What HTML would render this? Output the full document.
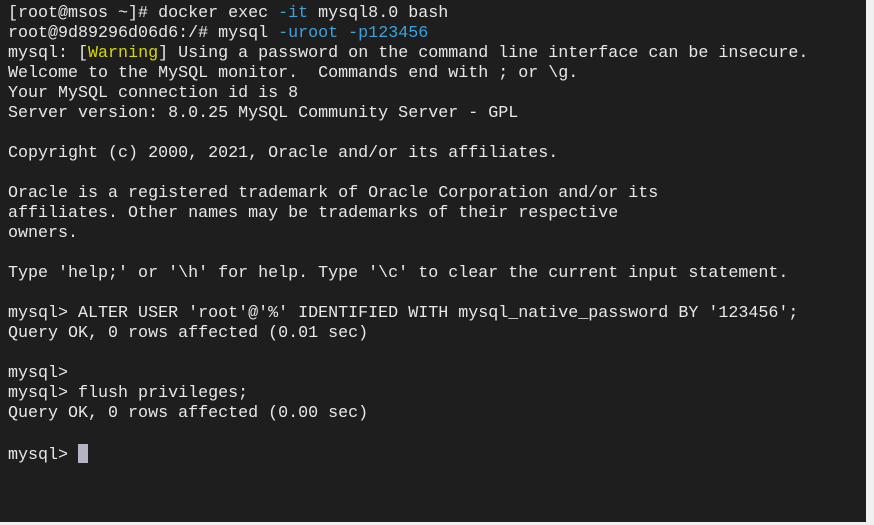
<!DOCTYPE html>
<html><head><meta charset="utf-8"><style>
html,body{margin:0;padding:0;width:874px;height:525px;background:#f0f0f0;overflow:hidden}
#t{position:absolute;left:0;top:0;width:866px;height:522px;background:#1e1e1e}
pre{margin:0;position:absolute;left:8px;top:4px;font-family:"Liberation Mono",monospace;font-size:16.68px;line-height:20px;color:#e8e8e8}
.b{color:#3ba3dc}.y{color:#d7d700}
.c{display:inline-block;width:10px;height:19px;background:#b4b4c4;vertical-align:-4px}
</style></head><body><div id="t"><pre>[root@msos ~]# docker exec <span class="b">-it</span> mysql8.0 bash
root@9d89296d06d6:/# mysql <span class="b">-uroot -p123456</span>
mysql: [<span class="y">Warning</span>] Using a password on the command line interface can be insecure.
Welcome to the MySQL monitor.  Commands end with ; or \g.
Your MySQL connection id is 8
Server version: 8.0.25 MySQL Community Server - GPL

Copyright (c) 2000, 2021, Oracle and/or its affiliates.

Oracle is a registered trademark of Oracle Corporation and/or its
affiliates. Other names may be trademarks of their respective
owners.

Type 'help;' or '\h' for help. Type '\c' to clear the current input statement.

mysql&gt; ALTER USER 'root'@'%' IDENTIFIED WITH mysql_native_password BY '123456';
Query OK, 0 rows affected (0.01 sec)

mysql&gt;
mysql&gt; flush privileges;
Query OK, 0 rows affected (0.00 sec)

mysql&gt; <span class="c"></span></pre></div></body></html>
